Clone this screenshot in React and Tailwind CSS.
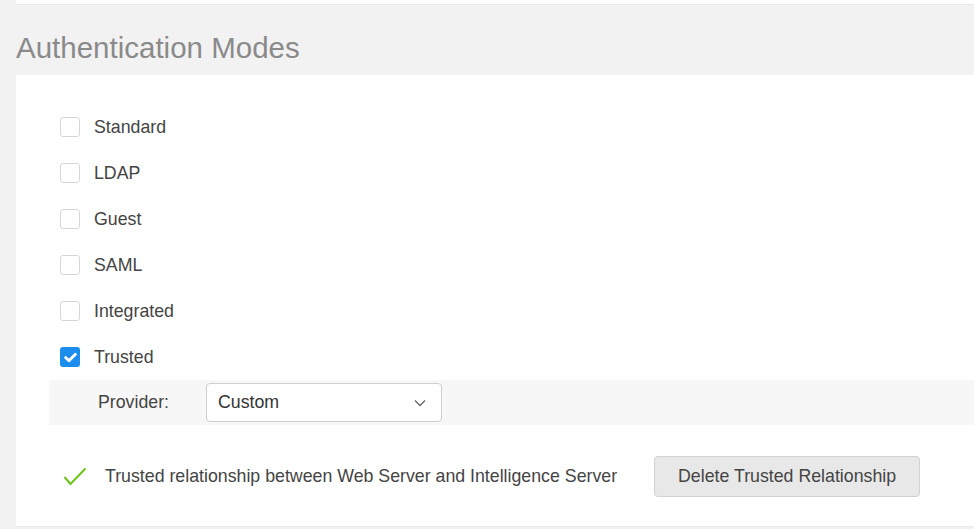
import React from "react";

const modes = [
  { label: "Standard", checked: false },
  { label: "LDAP", checked: false },
  { label: "Guest", checked: false },
  { label: "SAML", checked: false },
  { label: "Integrated", checked: false },
  { label: "Trusted", checked: true },
];

function Box({ checked }) {
  if (checked) {
    return (
      <div className="w-[20px] h-[20px] rounded-[3px] bg-[#1b8ded] flex items-center justify-center">
        <svg width="13" height="11" viewBox="0 0 13 11">
          <path d="M1.6 5.6 L4.9 8.8 L11.4 2.2" fill="none" stroke="#fff" strokeWidth="2.8" strokeLinecap="round" strokeLinejoin="round" />
        </svg>
      </div>
    );
  }
  return <div className="w-[20px] h-[20px] rounded-[3px] border border-[#d6d6d6] bg-white" />;
}

export default function App() {
  return (
    <div className="w-[974px] h-[529px] overflow-hidden bg-[#f2f2f2] pl-4 font-['Liberation_Sans',Arial,sans-serif]">
      <div className="h-[5px] bg-white border-b border-[#e8e8e8]" />
      <div className="h-[70px] flex items-center text-[29.5px] text-[#8a8a8a] pt-[17px]">Authentication Modes</div>
      <div className="bg-white h-[452px] pt-[29px] border-b border-[#ececec]">
        {modes.map((m) => (
          <div key={m.label} className="h-[46px] flex items-center pl-[44px]">
            <Box checked={m.checked} />
            <span className="ml-[14px] text-[17.75px] text-[#444]">{m.label}</span>
          </div>
        ))}
        <div className="ml-[33px] h-[45px] bg-[#f7f7f7] flex items-center">
          <span className="ml-[49px] w-[108px] text-[17.75px] text-[#444]">Provider:</span>
          <div className="w-[236px] h-[39px] bg-white border border-[#cfcfcf] rounded-[4px] flex items-center justify-between pl-[11px] pr-[15px]">
            <span className="text-[17.75px] text-[#333]">Custom</span>
            <svg width="12" height="8" viewBox="0 0 12 8">
              <path d="M1 1.5 L6 6.5 L11 1.5" fill="none" stroke="#666" strokeWidth="1.3" />
            </svg>
          </div>
        </div>
        <div className="mt-[31px] h-[40px] flex items-center">
          <div className="ml-[47px] w-[42px]">
            <svg width="24" height="19" viewBox="0 0 24 19">
              <path d="M1.5 10 L7.5 17 L22.5 1.5" fill="none" stroke="#6cc417" strokeWidth="2" />
            </svg>
          </div>
          <span className="text-[17.75px] text-[#444]">Trusted relationship between Web Server and Intelligence Server</span>
          <div className="ml-[37px] w-[266px] h-[41px] bg-[#e8e8e8] border border-[#d2d2d2] rounded-[4px] flex items-center justify-center text-[17.75px] text-[#444]">
            Delete Trusted Relationship
          </div>
        </div>
      </div>
    </div>
  );
}
